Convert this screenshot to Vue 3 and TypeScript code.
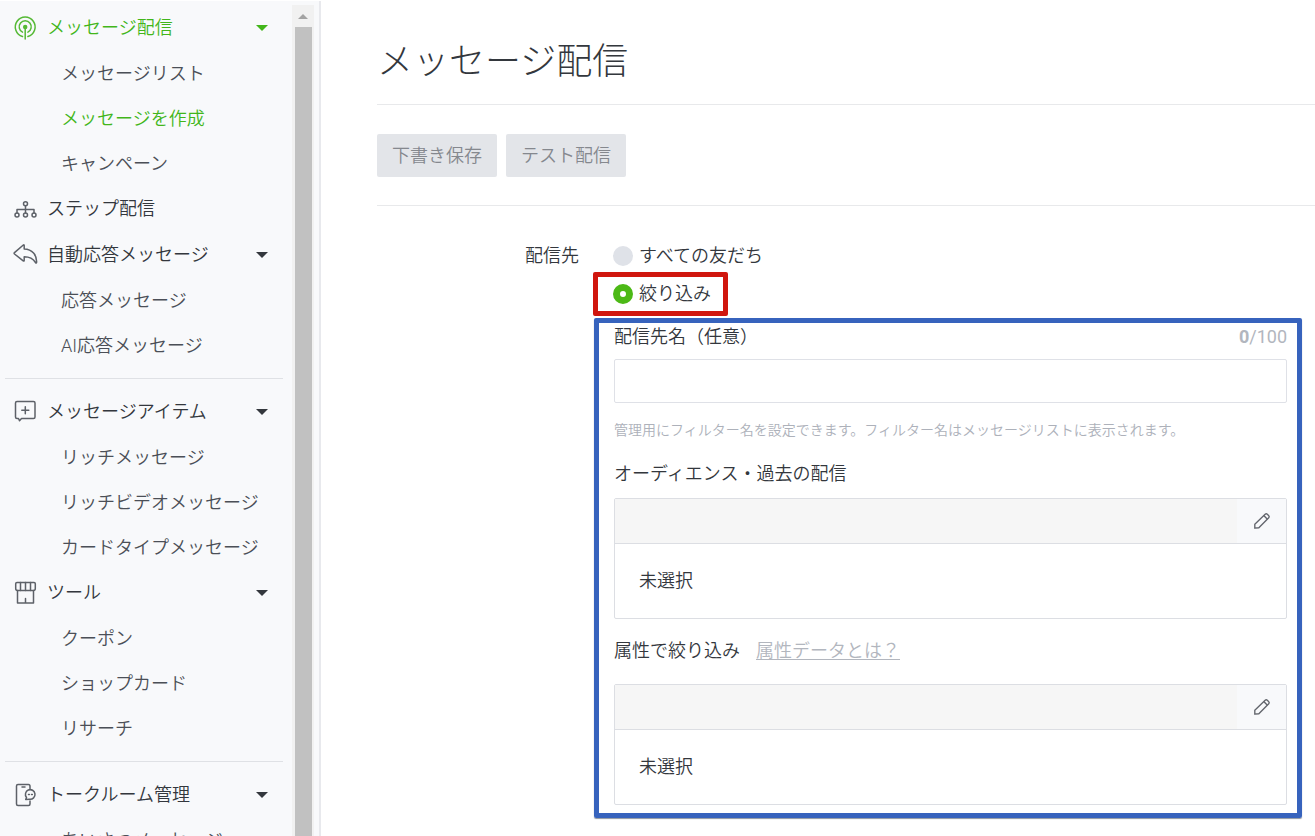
<script setup lang="ts">
import { ref } from 'vue'

type IconName = 'broadcast' | 'steps' | 'reply' | 'item' | 'shop' | 'room'

interface Child {
  label: string
  active?: boolean
}

interface Section {
  label: string
  icon: IconName
  active?: boolean
  children: Child[]
}

const groups: Section[][] = [
  [
    {
      label: 'メッセージ配信',
      icon: 'broadcast',
      active: true,
      children: [
        { label: 'メッセージリスト' },
        { label: 'メッセージを作成', active: true },
        { label: 'キャンペーン' },
      ],
    },
    { label: 'ステップ配信', icon: 'steps', children: [] },
    {
      label: '自動応答メッセージ',
      icon: 'reply',
      children: [{ label: '応答メッセージ' }, { label: 'AI応答メッセージ' }],
    },
  ],
  [
    {
      label: 'メッセージアイテム',
      icon: 'item',
      children: [
        { label: 'リッチメッセージ' },
        { label: 'リッチビデオメッセージ' },
        { label: 'カードタイプメッセージ' },
      ],
    },
    {
      label: 'ツール',
      icon: 'shop',
      children: [{ label: 'クーポン' }, { label: 'ショップカード' }, { label: 'リサーチ' }],
    },
  ],
  [
    {
      label: 'トークルーム管理',
      icon: 'room',
      children: [{ label: 'あいさつメッセージ' }],
    },
  ],
]

const target = ref<'all' | 'filter'>('filter')
const filterName = ref('')
</script>

<template>
  <div class="page">
    <aside class="sidebar">
      <nav class="nav">
        <div v-for="(group, gi) in groups" :key="gi" class="group">
          <template v-for="section in group" :key="section.label">
            <button type="button" class="section" :class="{ active: section.active }">
              <svg class="icon" viewBox="0 0 24 24" aria-hidden="true">
                <template v-if="section.icon === 'broadcast'">
                  <path d="M9.500 20.500a9.900 9.900 0 1 1 5.400 0" />
                  <path d="M9.500 16.200a6 6 0 1 1 5.400 0" />
                  <path d="M12.200 11v12" />
                  <circle cx="12.200" cy="11" r="1.500" fill="currentColor" />
                </template>
                <template v-else-if="section.icon === 'steps'">
                  <circle cx="12.500" cy="6.800" r="2" />
                  <path d="M12.500 8.800v7.200M4 16v-3.500h17v3.500" />
                  <circle cx="4" cy="18" r="2" />
                  <circle cx="12.500" cy="18" r="2" />
                  <circle cx="21" cy="18" r="2" />
                </template>
                <template v-else-if="section.icon === 'reply'">
                  <path
                    d="M1.500 9.600 10.300 2q.9-.6 .9 .5v3.600c8 .3 12.800 6 12.400 13.200q-.3 1.400-1.100 .2c-2.600-4.200-6-5.700-11.300-5.700v3.500q0 1.200-1 .5L1.500 11q-.8-.7 0-1.400z"
                  />
                </template>
                <template v-else-if="section.icon === 'item'">
                  <path d="M4 1.500h16.500q1.500 0 1.500 1.500v14q0 1.500-1.500 1.500H8.500l-2 2.200-1-2.200H4q-1.500 0-1.500-1.500V3q0-1.500 1.500-1.500z" />
                  <path d="M12.300 6.800v7M8.800 10.300h7" />
                </template>
                <template v-else-if="section.icon === 'shop'">
                  <path d="M4 1.500h17q1.300 0 1.300 1.300v4.700q0 2-1.800 2h-16q-1.800 0-1.800-2V2.800q0-1.300 1.300-1.300z" />
                  <path d="M7.500 1.500v8M12.500 1.500v8M17.500 1.500v8M4.500 9.500v12.500h16v-12.500M12.500 17.500v4" />
                </template>
                <template v-else>
                  <path d="M17 5.500v-2Q17 1.500 15.500 1.500H5Q3.500 1.500 3.500 3v18q0 1.500 1.500 1.500h10.500q1.500 0 1.500-1.500v-3" />
                  <path d="M9 4h3M15.500 11.500h.8M18.500 11.500h.8" />
                  <path d="M13.500 14.500a4.800 4.800 0 1 1 3 1.700l-3.800 .3z" />
                </template>
              </svg>
              <span class="section-label">{{ section.label }}</span>
              <span v-if="section.children.length" class="caret"></span>
            </button>
            <a
              v-for="child in section.children"
              :key="child.label"
              href="#"
              class="child"
              :class="{ active: child.active }"
              >{{ child.label }}</a
            >
          </template>
        </div>
      </nav>
      <div class="track" aria-hidden="true">
        <span class="track-arrow"></span>
        <span class="thumb"></span>
      </div>
    </aside>

    <main class="main">
      <h1 class="title">メッセージ配信</h1>
      <div class="actions">
        <button type="button" class="action">下書き保存</button>
        <button type="button" class="action">テスト配信</button>
      </div>

      <form class="form" @submit.prevent>
        <span id="target-label" class="form-label">配信先</span>
        <div class="form-body" role="radiogroup" aria-labelledby="target-label">
          <label class="option">
            <input v-model="target" type="radio" name="target" value="all" class="radio" />
            <span>すべての友だち</span>
          </label>
          <label class="option marked">
            <input v-model="target" type="radio" name="target" value="filter" class="radio" />
            <span>絞り込み</span>
          </label>

          <section class="filter">
            <div class="row">
              <label for="filter-name">配信先名（任意）</label>
              <span class="counter"><b>{{ filterName.length }}</b>/100</span>
            </div>
            <input id="filter-name" v-model="filterName" type="text" maxlength="100" class="text" />
            <p class="help">
              管理用にフィルター名を設定できます。フィルター名はメッセージリストに表示されます。
            </p>

            <div class="row">オーディエンス・過去の配信</div>
            <div class="panel audience">
              <div class="panel-head">
                <button type="button" class="edit" aria-label="編集">
                  <svg class="pencil" viewBox="0 0 20 20" aria-hidden="true">
                    <path d="M2 18v-4.500L13.500 2.500q1.200-1 2.400 0l1.600 1.600q1.100 1.200 0 2.400L6.500 17.500z" />
                    <path d="M12 4l4 4" />
                  </svg>
                </button>
              </div>
              <div class="panel-body">未選択</div>
            </div>

            <div class="row attribute">
              <span>属性で絞り込み</span>
              <a href="#" class="link">属性データとは？</a>
            </div>
            <div class="panel">
              <div class="panel-head">
                <button type="button" class="edit" aria-label="編集">
                  <svg class="pencil" viewBox="0 0 20 20" aria-hidden="true">
                    <path d="M2 18v-4.500L13.500 2.500q1.200-1 2.400 0l1.600 1.600q1.100 1.200 0 2.400L6.500 17.500z" />
                    <path d="M12 4l4 4" />
                  </svg>
                </button>
              </div>
              <div class="panel-body">未選択</div>
            </div>
          </section>
        </div>
      </form>
    </main>
  </div>
</template>

<style>
body {
  margin: 0;
  background: #fff;
}
</style>

<style scoped>
* {
  box-sizing: border-box;
}

.page {
  display: flex;
  height: 100vh;
  overflow: hidden;
  color: #33373d;
  font-family: Roboto, 'Noto Sans CJK JP', sans-serif;
  font-size: 18px;
  font-weight: 350;
  line-height: 28px;
}

button,
input {
  font: inherit;
  color: inherit;
}

.sidebar {
  display: flex;
  flex: 0 0 321px;
  margin-top: 1px;
  background: #f8f9fb;
  border-right: 2px solid #e8e9ed;
  overflow: hidden;
}

.nav {
  flex: 1;
  padding: 4px 9px 0 5px;
}

.group + .group {
  margin-top: 10px;
  padding-top: 10px;
  border-top: 1px solid #dfe1e5;
}

.section {
  display: flex;
  align-items: center;
  width: 100%;
  height: 46px;
  padding: 0 15px 0 8px;
  border: 0;
  background: none;
  text-align: left;
}

.icon {
  flex: none;
  width: 24px;
  height: 24px;
  margin-right: 10px;
  overflow: visible;
  fill: none;
  stroke: #5d6168;
  stroke-width: 1.5;
  stroke-linecap: round;
  stroke-linejoin: round;
}

.active .icon {
  color: #55b935;
  stroke: #55b935;
}

.section-label {
  flex: 1;
  white-space: nowrap;
}

.caret {
  border: 6px solid transparent;
  border-top-color: currentColor;
  border-bottom-width: 0;
}

.child {
  display: block;
  height: 45px;
  padding-left: 56px;
  color: #4b4f57;
  line-height: 45px;
  text-decoration: none;
  white-space: nowrap;
}

.section.active,
.child.active {
  color: #42b61a;
}

.track {
  display: flex;
  flex-direction: column;
  align-items: center;
  width: 22px;
  margin: 4px 5px 0 0;
  background: #f1f1f1;
}

.track-arrow {
  margin: 9px 0 8px;
  border: 5px solid transparent;
  border-bottom-color: #a3a3a3;
  border-top-width: 0;
}

.thumb {
  flex: 1;
  width: 17px;
  background: #c1c1c1;
}

.main {
  flex: 1;
  min-width: 0;
  padding: 34px 0 0 56px;
}

.title {
  margin: 0;
  padding-bottom: 13px;
  border-bottom: 1px solid #e8e9eb;
  font-size: 36px;
  font-weight: 300;
  line-height: 57px;
}

.actions {
  display: flex;
  gap: 9px;
  padding: 29px 0 28px;
  border-bottom: 1px solid #e8e9eb;
}

.action {
  height: 43px;
  padding: 0 15px;
  border: 0;
  border-radius: 2px;
  background: #e3e5e9;
  color: #85888e;
}

.form {
  display: flex;
  gap: 14px;
  padding: 36px 13px 0 0;
}

.form-label {
  flex: 0 0 202px;
  text-align: right;
}

.form-body {
  flex: 1;
  min-width: 0;
}

.option {
  display: flex;
  align-items: center;
  gap: 6px;
  width: fit-content;
  padding-left: 20px;
}

.marked {
  height: 44px;
  margin-top: 2px;
  padding: 0 12px 0 15px;
  border: 5px solid #d0160e;
  border-radius: 2px;
}

.radio {
  appearance: none;
  width: 20px;
  height: 20px;
  margin: 0;
  border-radius: 50%;
  background: #dfe2e8;
}

.radio:checked {
  border: 7px solid #4cb916;
  background: #fff;
}

.filter {
  margin: 2px 0 0 1px;
  padding: 0 10px 8px 15px;
  border: 5px solid #3763bd;
  border-radius: 2px;
  box-shadow: 0 1px 1px #8d949f;
}

.row {
  display: flex;
  justify-content: space-between;
}

.counter {
  color: #b2b6be;
  font-weight: 400;
}

.counter b {
  font-weight: 700;
}

.text {
  display: block;
  width: 100%;
  height: 44px;
  margin-top: 8px;
  padding: 0 12px;
  border: 1px solid #dfe1e7;
  border-radius: 2px;
  background: #fff;
}

.help {
  margin: 17px 0 20px;
  color: #adb1ba;
  font-size: 14px;
  line-height: 20px;
}

.panel {
  border: 1px solid #dcdee3;
  border-radius: 2px;
}

.audience {
  margin: 10px 0 18px;
}

.panel-head {
  display: flex;
  justify-content: flex-end;
  height: 45px;
  border-bottom: 1px solid #dcdee3;
  background: #f6f6f6;
}

.edit {
  display: grid;
  place-items: center;
  width: 49px;
  padding: 0;
  border: 0;
  background: #f8f9fb;
}

.pencil {
  width: 18px;
  height: 18px;
  fill: none;
  stroke: #62656c;
  stroke-width: 1.5;
  stroke-linejoin: round;
}

.panel-body {
  padding: 23px 24px;
}

.attribute {
  justify-content: flex-start;
  gap: 16px;
  margin-bottom: 19px;
}

.link {
  color: #b2b6be;
  text-decoration: underline;
  text-underline-offset: 2px;
}
</style>
